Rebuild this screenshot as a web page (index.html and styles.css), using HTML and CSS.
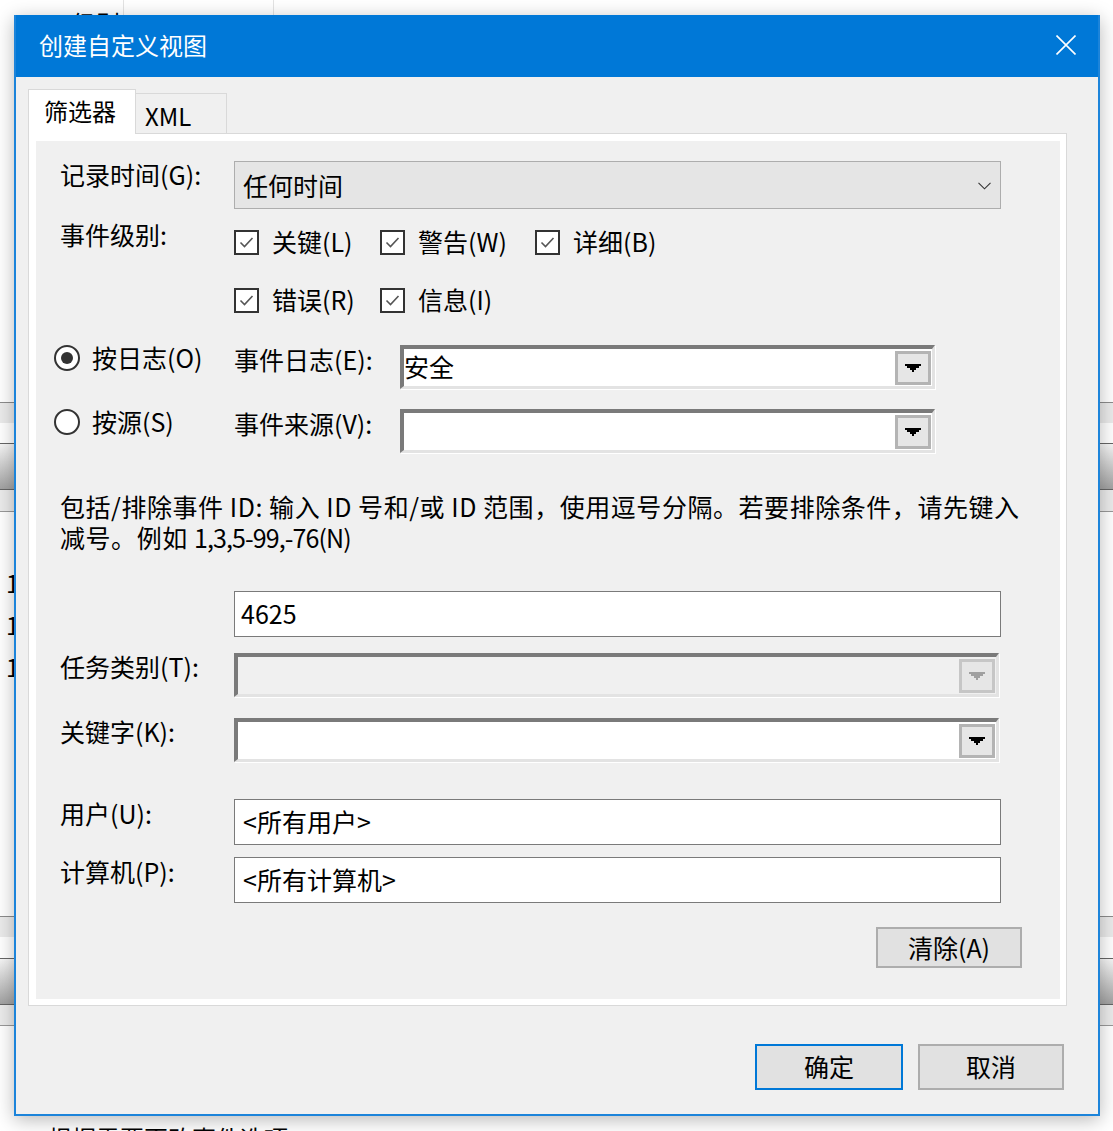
FILE: index.html
```html
<!DOCTYPE html>
<html lang="zh-CN">
<head>
<meta charset="utf-8">
<title>创建自定义视图</title>
<link rel="stylesheet" href="styles.css">
</head>
<body>
<div class="backdrop">
  <div class="bg-head">
    <div class="bg-col bg-c1"><span class="bg-peek">级别</span></div>
    <div class="bg-col bg-c2"></div>
  </div>
  <div class="bg-band">
    <div class="bl l-a"></div><div class="bb b-light"></div><div class="bb b-white"></div><div class="bl l-b"></div>
    <div class="bb b-grad"></div><div class="bl l-b"></div><div class="bb b-light2"></div><div class="bl l-c"></div>
  </div>
  <div class="bg-rows">
    <div class="bg-row">1</div>
    <div class="bg-row">1</div>
    <div class="bg-row">1</div>
  </div>
  <div class="bg-band bg-band2">
    <div class="bl l-a"></div><div class="bb b-light"></div><div class="bb b-white2"></div><div class="bl l-b"></div>
    <div class="bb b-grad"></div><div class="bl l-b"></div><div class="bb b-light"></div><div class="bl l-c"></div>
  </div>
  <div class="bg-foot">根据需要更改事件选项</div>
</div>

<div class="dialog">
  <div class="titlebar">
    <span class="title">创建自定义视图</span>
    <svg class="close" width="20" height="20" viewBox="0 0 20 20"><path d="M0.5 0.5 L19.5 19.5 M19.5 0.5 L0.5 19.5" stroke="#fff" stroke-width="1.6" fill="none"/></svg>
  </div>
  <div class="dbody">
    <div class="tabs">
      <div class="tab tab-on">筛选器</div>
      <div class="tab tab-off">XML</div>
    </div>
    <div class="panel">
      <div class="inner">
        <div class="row row-time">
          <div class="lbl">记录时间(G):</div>
          <div class="select">
            <span>任何时间</span>
            <svg class="chev" width="13" height="8" viewBox="0 0 13 8"><polyline points="0.5,0.8 6.5,6.8 12.5,0.8" stroke="#333" stroke-width="1.1" fill="none"/></svg>
          </div>
        </div>

        <div class="row row-level">
          <div class="lbl">事件级别:</div>
          <div class="checks">
            <div class="chk"><span class="box"><svg width="21" height="21" viewBox="0 0 21 21"><polyline points="4.5,10.5 8.5,14.5 16.5,6" stroke="#555" stroke-width="1.6" fill="none"/></svg></span><span class="chk-text">关键(L)</span></div>
            <div class="chk"><span class="box"><svg width="21" height="21" viewBox="0 0 21 21"><polyline points="4.5,10.5 8.5,14.5 16.5,6" stroke="#555" stroke-width="1.6" fill="none"/></svg></span><span class="chk-text">警告(W)</span></div>
            <div class="chk"><span class="box"><svg width="21" height="21" viewBox="0 0 21 21"><polyline points="4.5,10.5 8.5,14.5 16.5,6" stroke="#555" stroke-width="1.6" fill="none"/></svg></span><span class="chk-text">详细(B)</span></div>
            <div class="chk"><span class="box"><svg width="21" height="21" viewBox="0 0 21 21"><polyline points="4.5,10.5 8.5,14.5 16.5,6" stroke="#555" stroke-width="1.6" fill="none"/></svg></span><span class="chk-text">错误(R)</span></div>
            <div class="chk"><span class="box"><svg width="21" height="21" viewBox="0 0 21 21"><polyline points="4.5,10.5 8.5,14.5 16.5,6" stroke="#555" stroke-width="1.6" fill="none"/></svg></span><span class="chk-text">信息(I)</span></div>
          </div>
        </div>

        <div class="row row-log1">
          <div class="radio-item"><span class="radio on"></span><span class="radio-text">按日志(O)</span></div>
          <div class="lbl2">事件日志(E):</div>
          <div class="combo combo-short">
            <span class="combo-text">安全</span>
            <span class="dd"><svg width="16" height="8" viewBox="0 0 16 8"><path d="M0 0H16V2H14V4H11V6H9V8H7V6H5V4H2V2H0Z" fill="#000"/></svg></span>
          </div>
        </div>

        <div class="row row-log2">
          <div class="radio-item"><span class="radio"></span><span class="radio-text">按源(S)</span></div>
          <div class="lbl2">事件来源(V):</div>
          <div class="combo combo-short">
            <span class="combo-text"></span>
            <span class="dd"><svg width="16" height="8" viewBox="0 0 16 8"><path d="M0 0H16V2H14V4H11V6H9V8H7V6H5V4H2V2H0Z" fill="#000"/></svg></span>
          </div>
        </div>

        <div class="desc">
          <div class="desc-line">包括/排除事件 ID: 输入 ID 号和/或 ID 范围，使用逗号分隔。若要排除条件，请先键入</div>
          <div class="desc-line">减号。例如 <span class="num">1,3,5-99,-76(N)</span></div>
        </div>

        <div class="row row-id">
          <div class="lbl"></div>
          <div class="textbox">4625</div>
        </div>

        <div class="row row-task">
          <div class="lbl">任务类别(T):</div>
          <div class="combo combo-long combo-disabled">
            <span class="combo-text"></span>
            <span class="dd dd-disabled"><svg width="16" height="8" viewBox="0 0 16 8"><path d="M0 0H16V2H14V4H11V6H9V8H7V6H5V4H2V2H0Z" fill="#a0a0a0"/></svg></span>
          </div>
        </div>

        <div class="row row-kw">
          <div class="lbl">关键字(K):</div>
          <div class="combo combo-long">
            <span class="combo-text"></span>
            <span class="dd"><svg width="16" height="8" viewBox="0 0 16 8"><path d="M0 0H16V2H14V4H11V6H9V8H7V6H5V4H2V2H0Z" fill="#000"/></svg></span>
          </div>
        </div>

        <div class="row row-user">
          <div class="lbl lbl-low">用户(U):</div>
          <div class="textbox">&lt;所有用户&gt;</div>
        </div>

        <div class="row row-pc">
          <div class="lbl lbl-low">计算机(P):</div>
          <div class="textbox">&lt;所有计算机&gt;</div>
        </div>

        <div class="row-clear">
          <div class="btn btn-clear">清除(A)</div>
        </div>
      </div>
    </div>
    <div class="footer">
      <div class="btn btn-ok">确定</div>
      <div class="btn btn-cancel">取消</div>
    </div>
  </div>
</div>
</body>
</html>
```

FILE: styles.css
```css
* { box-sizing: border-box; }
html, body { margin: 0; padding: 0; }
body {
  width: 1113px;
  height: 1131px;
  overflow: hidden;
  background: #fff;
  font-family: "Noto Sans CJK SC", "Microsoft YaHei", sans-serif;
  font-size: 25px;
  color: #000;
  position: relative;
}

/* ---------- background window ---------- */
.backdrop { width: 1113px; }
.bg-head { display: flex; height: 402px; }
.bg-col { height: 100%; border-right: 1px solid #e3e3e3; }
.bg-c1 { width: 124px; }
.bg-c2 { width: 150px; }
.bg-peek { display: block; padding: 8px 0 0 72px; font-size: 24px; line-height: 30px; }
.bg-band { display: flex; flex-direction: column; }
.bl { height: 1px; }
.l-a { background: #8c8c8c; }
.l-b { background: #666; }
.l-c { background: #999; }
.bb { width: 100%; }
.b-light { height: 20px; background: #ebebeb; }
.b-light2 { height: 21px; background: #ebebeb; }
.b-white { height: 20px; background: #fff; }
.b-white2 { height: 21px; background: #fff; }
.b-grad { height: 45px; background: linear-gradient(#f6f6f6, #a2a2a2); }
.bg-rows { margin-top: 50px; }
.bg-row { height: 42px; line-height: 42px; padding-left: 6px; font-size: 24px; }
.bg-band2 { margin-top: 228px; }
.bg-foot { margin-top: 97px; padding-left: 48px; font-size: 24px; line-height: 30px; white-space: nowrap; }

/* ---------- dialog ---------- */
.dialog {
  position: absolute;
  left: 14px;
  top: 15px;
  width: 1086px;
  height: 1101px;
  border: 2px solid #1c84da;
  background: #f0f0f0;
  box-shadow: 0 4px 18px rgba(0, 0, 0, 0.28);
  display: flex;
  flex-direction: column;
}
.titlebar {
  height: 62px;
  margin-top: -2px;
  padding-bottom: 2px;
  background: #0078d7;
  display: flex;
  align-items: center;
  justify-content: space-between;
  padding-left: 23px;
  padding-right: 22px;
  flex: none;
}
.title { color: #fff; font-size: 24px; line-height: 30px; }
.close { display: block; }

.dbody { padding: 12px 0 0 12px; flex: 1; }
.tabs { display: flex; align-items: flex-end; height: 44px; position: relative; z-index: 2; }
.tab { font-size: 24px; border: 1px solid #d9d9d9; border-bottom: none; }
.tab-on {
  width: 108px;
  height: 45px;
  margin-bottom: -1px;
  background: #fff;
  padding-left: 15px;
  line-height: 42px;
}
.tab-off {
  width: 91px;
  height: 40px;
  border-left: none;
  background: #f0f0f0;
  padding-left: 9px;
  line-height: 44px;
}
.panel {
  width: 1039px;
  height: 873px;
  border: 1px solid #d9d9d9;
  background: #fff;
  padding: 7px 6px 6px 7px;
}
.inner {
  height: 100%;
  background: #f0f0f0;
  padding: 20px 0 0 24px;
  display: flex;
  flex-direction: column;
}
.row { display: flex; align-items: flex-start; }
.lbl { width: 174px; flex: none; line-height: 26px; white-space: nowrap; }
.lbl-low { padding-top: 1px; }

.select {
  width: 767px;
  height: 48px;
  background: #e5e5e5;
  border: 1px solid #adadad;
  display: flex;
  align-items: center;
  justify-content: space-between;
  padding: 0 9px 0 8px;
}
.select span { line-height: 30px; }
.chev { display: block; margin-top: 2px; }

.row-level { margin-top: 12px; }
.checks {
  padding-top: 6px;
  display: grid;
  grid-template-columns: 146px 155px auto;
  row-gap: 28px;
}
.chk { display: flex; align-items: center; height: 30px; white-space: nowrap; }
.chk-text { line-height: 26px; padding-bottom: 2px; }
.box {
  width: 25px;
  height: 25px;
  border: 2px solid #333;
  background: #fff;
  margin-right: 13px;
  display: flex;
  align-items: center;
  justify-content: center;
}
.box svg { display: block; }

.row-log1 { margin-top: 30px; }
.row-log2 { margin-top: 20px; }
.radio-item {
  width: 180px;
  margin-left: -6px;
  height: 26px;
  display: flex;
  align-items: center;
  white-space: nowrap;
  flex: none;
}
.radio-text { line-height: 26px; padding-bottom: 3px; }
.radio {
  width: 26px;
  height: 26px;
  border-radius: 50%;
  border: 2px solid #333;
  background: #fff;
  margin-right: 12px;
  display: flex;
  align-items: center;
  justify-content: center;
}
.radio.on::after {
  content: "";
  width: 12px;
  height: 12px;
  border-radius: 50%;
  background: #333;
}
.lbl2 { width: 166px; flex: none; line-height: 28px; white-space: nowrap; }

.combo {
  height: 44px;
  background: #fff;
  border-top: 4px solid #7a7a7a;
  border-left: 4px solid #7a7a7a;
  border-right: 3px solid #e3e3e3;
  border-bottom: 3px solid #e3e3e3;
  box-shadow: 1px 1px 0 #fff;
  display: flex;
  align-items: center;
  justify-content: space-between;
}
.combo-short { width: 535px; }
.combo-long { width: 765px; }
.combo-text { line-height: 30px; padding-bottom: 4px; }
.dd {
  width: 36px;
  height: 34px;
  border: 3px solid #b4b4b4;
  background: #e6e6e6;
  margin-right: 1px;
  display: flex;
  align-items: center;
  justify-content: center;
}
.dd svg { display: block; margin-top: 1px; }
.combo-disabled { background: #f0f0f0; }
.dd-disabled { border-color: #c6c6c6; background: #e6e6e6; }

.desc { margin-top: 38px; white-space: nowrap; letter-spacing: 0.55px; }
.desc-line { height: 31px; line-height: 31px; }
.num { letter-spacing: -0.9px; }

.row-id { margin-top: 38px; }
.textbox {
  width: 767px;
  height: 46px;
  border: 1px solid #7a7a7a;
  background: #fff;
  padding-left: 6px;
  line-height: 42px;
  white-space: nowrap;
}
.row-task { margin-top: 16px; }
.row-kw { margin-top: 21px; }
.row-user { margin-top: 37px; }
.row-pc { margin-top: 12px; }
.row-user .textbox, .row-pc .textbox { padding-left: 8px; }

.row-clear { margin-top: 24px; display: flex; justify-content: flex-end; padding-right: 38px; }
.btn {
  height: 41px;
  background: #e1e1e1;
  border: 2px solid #adadad;
  display: flex;
  align-items: center;
  justify-content: center;
  white-space: nowrap;
  padding-bottom: 2px;
}
.btn-clear { width: 146px; }

.footer {
  margin-top: 38px;
  display: flex;
  justify-content: flex-end;
  gap: 15px;
  padding-right: 34px;
}
.btn-ok { width: 148px; height: 46px; border-color: #0078d7; }
.btn-cancel { width: 146px; height: 46px; }
```
